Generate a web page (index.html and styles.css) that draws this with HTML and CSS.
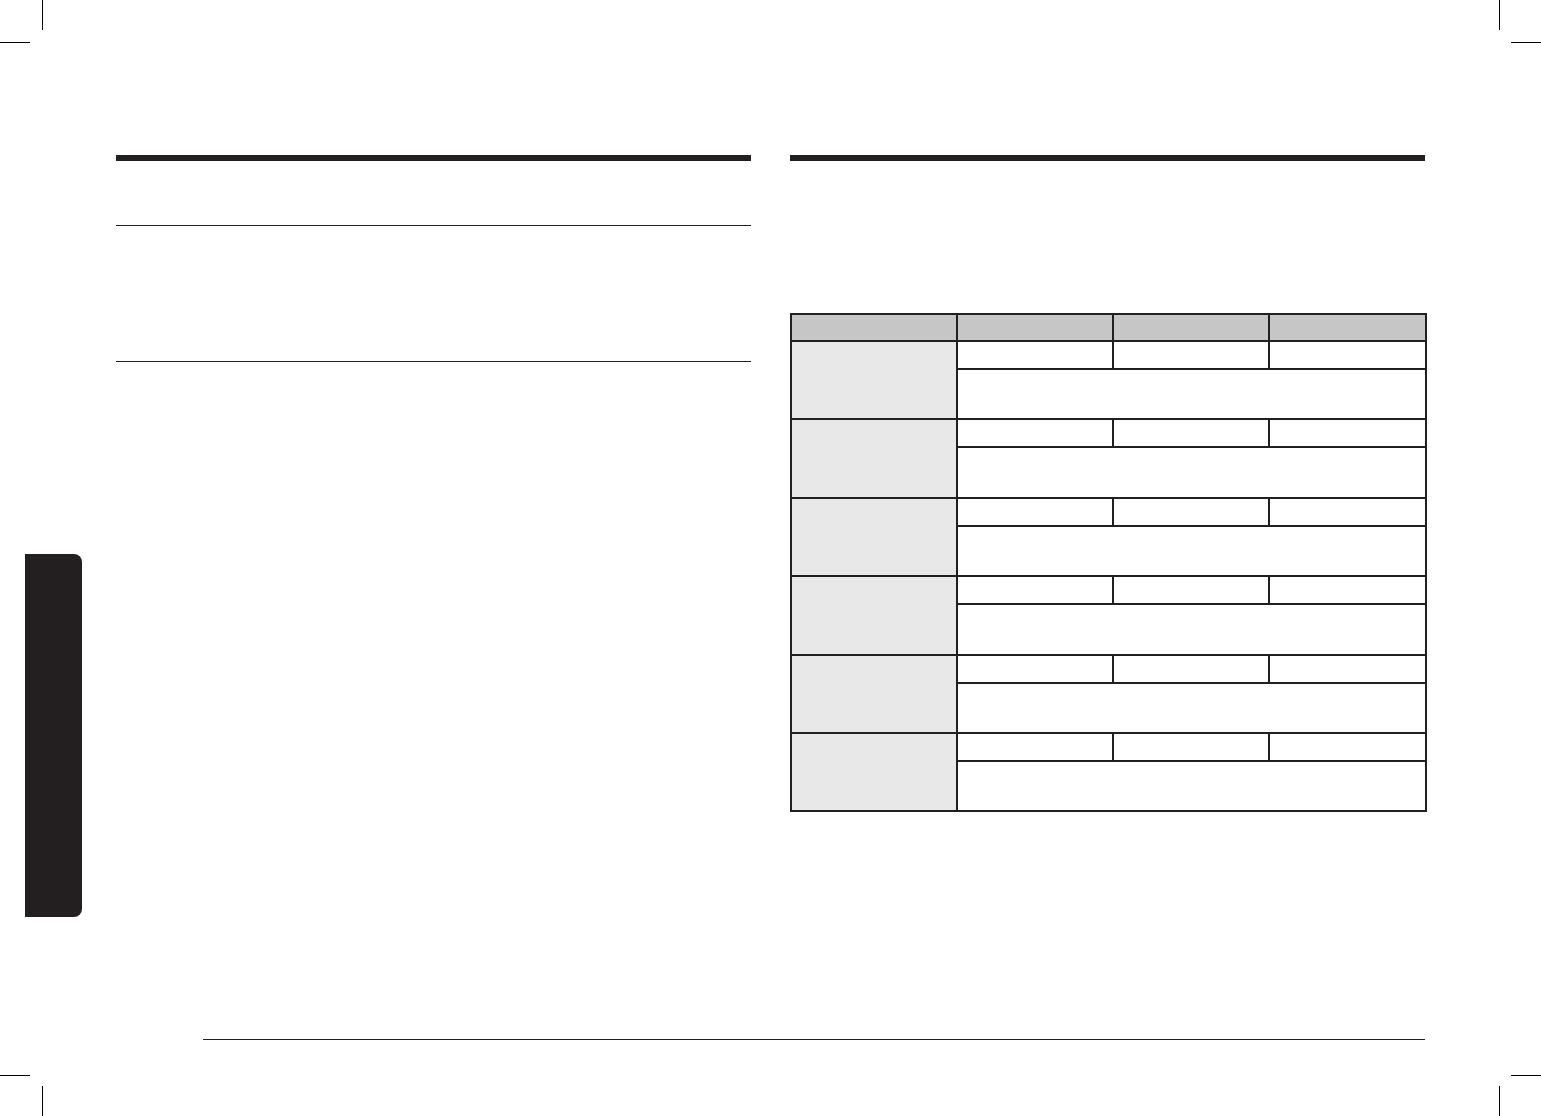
FILE: index.html
```html
<!DOCTYPE html>
<html lang="en">
<head>
<meta charset="utf-8">
<title>Manual page</title>
<link rel="stylesheet" href="styles.css">
</head>
<body>
<div class="page">
  <span class="mark mark-tl-v"></span>
  <span class="mark mark-tl-h"></span>
  <span class="mark mark-tr-v"></span>
  <span class="mark mark-tr-h"></span>
  <span class="mark mark-bl-v"></span>
  <span class="mark mark-bl-h"></span>
  <span class="mark mark-br-v"></span>
  <span class="mark mark-br-h"></span>
  <div class="side-tab"></div>

  <main class="spread">
    <section class="col col-left">
      <div class="head-bar"></div>
      <div class="rule rule-first"></div>
      <div class="rule rule-second"></div>
    </section>
    <section class="col col-right">
      <div class="head-bar"></div>
      <table class="grid">
        <colgroup>
          <col class="c1"><col class="c2"><col class="c3"><col class="c4">
        </colgroup>
        <thead>
          <tr class="hdr"><th></th><th></th><th></th><th></th></tr>
        </thead>
        <tbody>
          <tr class="sub"><td class="label" rowspan="2"></td><td></td><td></td><td></td></tr>
          <tr class="desc"><td colspan="3"></td></tr>
          <tr class="sub"><td class="label" rowspan="2"></td><td></td><td></td><td></td></tr>
          <tr class="desc"><td colspan="3"></td></tr>
          <tr class="sub"><td class="label" rowspan="2"></td><td></td><td></td><td></td></tr>
          <tr class="desc"><td colspan="3"></td></tr>
          <tr class="sub"><td class="label" rowspan="2"></td><td></td><td></td><td></td></tr>
          <tr class="desc"><td colspan="3"></td></tr>
          <tr class="sub"><td class="label" rowspan="2"></td><td></td><td></td><td></td></tr>
          <tr class="desc"><td colspan="3"></td></tr>
          <tr class="sub"><td class="label" rowspan="2"></td><td></td><td></td><td></td></tr>
          <tr class="desc"><td colspan="3"></td></tr>
        </tbody>
      </table>
    </section>
  </main>

  <footer class="footer-rule"></footer>
</div>
</body>
</html>
```
FILE: styles.css
```css
html, body {
  margin: 0;
  padding: 0;
  background: #ffffff;
  font-family: "Liberation Sans", Arial, sans-serif;
}

.page {
  position: relative;
  width: 1541px;
  height: 1116px;
  display: flex;
  flex-direction: column;
  box-sizing: border-box;
  overflow: hidden;
}

/* crop marks */
.mark {
  position: absolute;
  background: #000000;
}
.mark-tl-v { left: 42px; top: 0; width: 1px; height: 30px; }
.mark-tl-h { left: 0; top: 42px; width: 30px; height: 1px; }
.mark-tr-v { left: 1499px; top: 0; width: 1px; height: 30px; }
.mark-tr-h { left: 1511px; top: 42px; width: 30px; height: 1px; }
.mark-bl-v { left: 42px; top: 1086px; width: 1px; height: 30px; }
.mark-bl-h { left: 0; top: 1075px; width: 30px; height: 1px; }
.mark-br-v { left: 1499px; top: 1086px; width: 1px; height: 30px; }
.mark-br-h { left: 1511px; top: 1075px; width: 30px; height: 1px; }

/* side chapter tab */
.side-tab {
  position: absolute;
  left: 25px;
  top: 554px;
  width: 57px;
  height: 363px;
  background: #231f20;
  border-radius: 0 8px 8px 0;
}

.spread {
  display: flex;
  gap: 39px;
  padding: 155px 0 0 116px;
}

.col {
  width: 635px;
  display: flex;
  flex-direction: column;
}

.head-bar {
  height: 6px;
  background: #231f20;
}

.rule {
  height: 0;
  border-top: 1.5px solid #231f20;
}
.rule-first { margin-top: 64px; }
.rule-second { margin-top: 135px; }

/* table */
.grid {
  margin-top: 152px;
  width: 635px;
  border-collapse: collapse;
  table-layout: fixed;
}
.grid .c1 { width: 166px; }
.grid .c2 { width: 156px; }
.grid .c3 { width: 156px; }
.grid .c4 { width: 157px; }

.grid th,
.grid td {
  border: 2px solid #231f20;
  padding: 0;
}

.grid .hdr th {
  height: 25px;
  background: #c6c6c6;
}
.grid .sub td {
  height: 26px;
}
.grid .desc td {
  height: 48.4px;
}
.grid td.label {
  background: #e8e8e8;
}

.footer-rule {
  margin-top: auto;
  margin-bottom: 76px;
  margin-left: 203px;
  width: 1222px;
  height: 0;
  border-top: 1px solid #231f20;
}
```
